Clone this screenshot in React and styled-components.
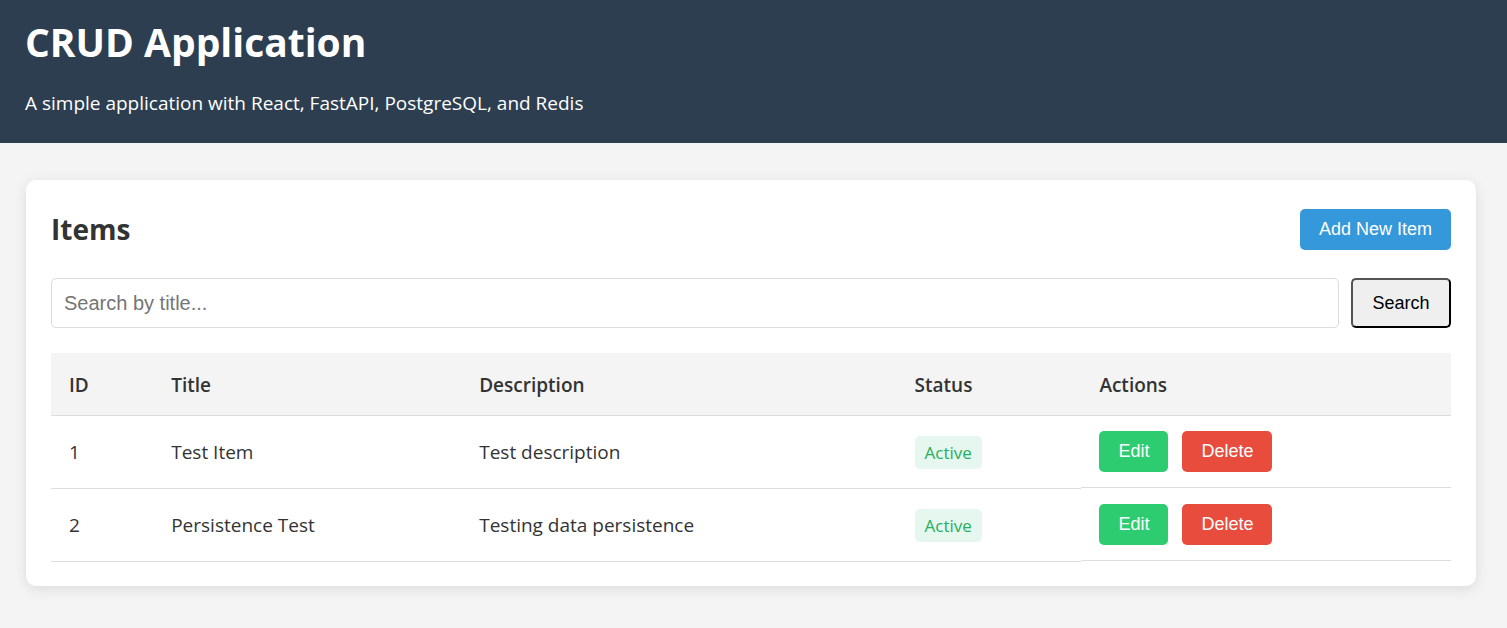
import React from "react";
import styled, { createGlobalStyle } from "styled-components";

const GlobalStyle = createGlobalStyle`
  * { box-sizing: border-box; }
  body {
    margin: 0;
    background: #f4f4f4;
    color: #333;
    font-family: "Segoe UI", "Open Sans", "Noto Sans", sans-serif;
    font-size: 19px;
    line-height: 30px;
  }
`;

const Header = styled.header`
  background: #2c3e50;
  color: #fff;
  padding: 12px 25px 24px;
`;

const PageTitle = styled.h1`
  margin: 0 0 16px;
  font-size: 39px;
  line-height: 60px;
  font-weight: 700;
`;

const Tagline = styled.p`
  margin: 0;
  line-height: 31px;
`;

const Main = styled.main`
  padding: 37px 31px 42px 26px;
`;

const Card = styled.section`
  background: #fff;
  border-radius: 10px;
  box-shadow: 0 3px 13px rgba(0, 0, 0, 0.1);
  padding: 25px 25px 24px;
`;

const CardHeader = styled.div`
  display: flex;
  justify-content: space-between;
  align-items: center;
  margin-bottom: 24px;
`;

const CardTitle = styled.h2`
  margin: 0;
  font-size: 28px;
  line-height: 49px;
  font-weight: 700;
`;

const tones = { primary: "#3498db", success: "#2ecc71", danger: "#e74c3c" };

const Button = styled.button`
  height: 41px;
  padding: 0 19px;
  border: 0;
  border-radius: 5px;
  background: ${({ $tone }) => tones[$tone]};
  color: #fff;
  font: 18px "Liberation Sans", Arial, sans-serif;
  cursor: pointer;
`;

const SearchForm = styled.form`
  display: flex;
  gap: 12px;
  margin-bottom: 25px;
`;

const SearchInput = styled.input`
  flex: 1;
  min-width: 0;
  height: 50px;
  padding: 0 12px;
  border: 1px solid #ddd;
  border-radius: 5px;
  font: 20px "Liberation Sans", Arial, sans-serif;
`;

const SearchButton = styled.button`
  width: 100px;
  border: 2px outset #000;
  border-radius: 5px;
  background: #efefef;
  color: #000;
  font: 18px "Liberation Sans", Arial, sans-serif;
`;

const Table = styled.table`
  width: 100%;
  table-layout: fixed;
  border-collapse: separate;
  border-spacing: 0;
`;

const Column = styled.col`
  width: ${({ $width }) => $width};
`;

const HeadCell = styled.th`
  height: 63px;
  padding: 2px 18px 0;
  background: #f4f4f4;
  border-bottom: 1px solid #ddd;
  text-align: left;
  font-weight: 600;
`;

const Cell = styled.td`
  height: 73px;
  padding: 0 18px;
  border-bottom: 1px solid #ddd;
`;

const ActionsCell = styled.td`
  display: flex;
  gap: 14px;
  padding: 15px 18px;
  border-bottom: 1px solid #ddd;
`;

const Status = styled.span`
  display: inline-block;
  padding: 0 10px;
  border-radius: 5px;
  background: #e6f7ef;
  color: #27ae60;
  font-size: 17px;
  line-height: 33px;
`;

const columns = [
  ["ID", "7.3%"],
  ["Title", "22%"],
  ["Description", "31.1%"],
  ["Status", "13.2%"],
  ["Actions", "26.4%"],
];

const items = [
  { id: 1, title: "Test Item", description: "Test description", status: "Active" },
  { id: 2, title: "Persistence Test", description: "Testing data persistence", status: "Active" },
];

export default function App() {
  return (
    <>
      <GlobalStyle />
      <Header>
        <PageTitle>CRUD Application</PageTitle>
        <Tagline>A simple application with React, FastAPI, PostgreSQL, and Redis</Tagline>
      </Header>
      <Main>
        <Card>
          <CardHeader>
            <CardTitle>Items</CardTitle>
            <Button type="button" $tone="primary">Add New Item</Button>
          </CardHeader>
          <SearchForm onSubmit={(e) => e.preventDefault()}>
            <SearchInput type="text" aria-label="Search by title" placeholder="Search by title..." />
            <SearchButton type="submit">Search</SearchButton>
          </SearchForm>
          <Table>
            <colgroup>
              {columns.map(([name, width]) => <Column key={name} $width={width} />)}
            </colgroup>
            <thead>
              <tr>{columns.map(([name]) => <HeadCell key={name} scope="col">{name}</HeadCell>)}</tr>
            </thead>
            <tbody>
              {items.map((item) => (
                <tr key={item.id}>
                  <Cell>{item.id}</Cell>
                  <Cell>{item.title}</Cell>
                  <Cell>{item.description}</Cell>
                  <Cell><Status>{item.status}</Status></Cell>
                  <ActionsCell>
                    <Button type="button" $tone="success">Edit</Button>
                    <Button type="button" $tone="danger">Delete</Button>
                  </ActionsCell>
                </tr>
              ))}
            </tbody>
          </Table>
        </Card>
      </Main>
    </>
  );
}
